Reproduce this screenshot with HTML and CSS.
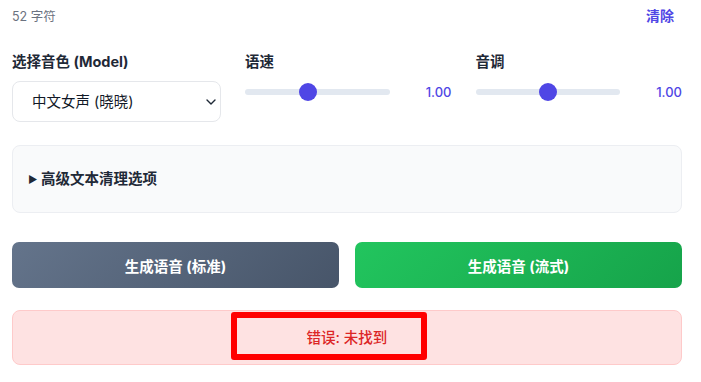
FILE: index.html
```html
<!DOCTYPE html>
<html lang="zh-CN">
<head>
<meta charset="utf-8">
<title>TTS</title>
<link rel="stylesheet" href="styles.css">
</head>
<body>
<div class="page">
  <div class="topbar">
    <span class="count">52 字符</span>
    <button class="clear" type="button">清除</button>
  </div>

  <div class="controls">
    <div class="field">
      <label class="label" for="voice">选择音色 (Model)</label>
      <div class="select-wrap">
        <select id="voice" class="select">
          <option>中文女声 (晓晓)</option>
        </select>
        <svg class="chevron" width="10" height="6" viewBox="0 0 10 6" aria-hidden="true">
          <path d="M1 1 L5 5 L9 1" fill="none" stroke="#1f2937" stroke-width="1.4" stroke-linecap="round" stroke-linejoin="round"/>
        </svg>
      </div>
    </div>
    <div class="field">
      <label class="label" for="speed">语速</label>
      <div class="range-row">
        <input id="speed" class="range" type="range" min="0.25" max="2" step="0.05" value="1">
        <span class="value">1.00</span>
      </div>
    </div>
    <div class="field">
      <label class="label" for="pitch">音调</label>
      <div class="range-row">
        <input id="pitch" class="range" type="range" min="0.5" max="1.5" step="0.05" value="1">
        <span class="value">1.00</span>
      </div>
    </div>
  </div>

  <details class="advanced">
    <summary class="summary">高级文本清理选项</summary>
  </details>

  <div class="actions">
    <button class="btn btn-standard" type="button">生成语音 (标准)</button>
    <button class="btn btn-stream" type="button">生成语音 (流式)</button>
  </div>

  <div class="error">
    <span class="error-text">错误: 未找到</span>
    <div class="highlight"></div>
  </div>
</div>
</body>
</html>
```

FILE: styles.css
```css
* { box-sizing: border-box; }

body {
  margin: 0;
  background: #ffffff;
  font-family: Inter, "Noto Sans CJK SC", sans-serif;
  color: #1f2937;
}

.page {
  width: 670px;
  margin-left: 12px;
  padding-top: 5px;
  display: flex;
  flex-direction: column;
}

.topbar {
  height: 20px;
  display: flex;
  align-items: center;
  justify-content: space-between;
}

.count {
  font-size: 12.5px;
  color: #6b7280;
}

.clear {
  border: 0;
  background: none;
  padding: 0 8px 0 0;
  font-family: inherit;
  font-size: 14px;
  font-weight: 700;
  color: #4f46e5;
  cursor: pointer;
}

.controls {
  margin-top: 27px;
  display: grid;
  grid-template-columns: repeat(3, 1fr);
  column-gap: 24px;
}

.field {
  display: flex;
  flex-direction: column;
}

.label {
  font-size: 14.5px;
  line-height: 20px;
  font-weight: 700;
  color: #1f2937;
}

.select-wrap {
  position: relative;
  margin-top: 9px;
  width: 209px;
}

.select {
  appearance: none;
  -webkit-appearance: none;
  width: 100%;
  height: 41px;
  padding: 0 28px 0 19px;
  border: 1px solid #e5e7eb;
  border-radius: 8px;
  background: #ffffff;
  font-family: inherit;
  font-size: 14.5px;
  color: #111827;
}

.chevron {
  position: absolute;
  right: 5px;
  top: 18px;
  pointer-events: none;
}

.range-row {
  margin-top: 9px;
  height: 22px;
  display: flex;
  align-items: center;
  gap: 12px;
}

.range {
  -webkit-appearance: none;
  appearance: none;
  flex: 1;
  min-width: 0;
  height: 18px;
  margin: 0;
  background: transparent;
}

.range::-webkit-slider-runnable-track {
  height: 6px;
  border-radius: 3px;
  background: #e2e8f0;
}

.range::-webkit-slider-thumb {
  -webkit-appearance: none;
  width: 18px;
  height: 18px;
  margin-top: -6px;
  border-radius: 50%;
  background: #4f46e5;
  border: 0;
}

.value {
  width: 50px;
  text-align: right;
  font-size: 13px;
  font-weight: 500;
  color: #4f46e5;
}

.advanced {
  margin-top: 23px;
  padding: 23px 15px;
  border: 1px solid #eceef2;
  border-radius: 8px;
  background: #f9fafb;
}

.summary {
  font-size: 14.5px;
  line-height: 20px;
  font-weight: 700;
  color: #1f2937;
  cursor: pointer;
  list-style: none;
}

.summary::-webkit-details-marker { display: none; }

.summary::before {
  content: "▶";
  display: inline-block;
  width: 13px;
  font-size: 10px;
  vertical-align: 1px;
}

.actions {
  margin-top: 29px;
  display: grid;
  grid-template-columns: 1fr 1fr;
  column-gap: 16px;
}

.btn {
  height: 46px;
  border: 0;
  border-radius: 7px;
  font-family: inherit;
  font-size: 14.5px;
  font-weight: 700;
  color: #ffffff;
  cursor: pointer;
}

.btn-standard {
  background: linear-gradient(135deg, #64748b, #475569);
}

.btn-stream {
  background: linear-gradient(135deg, #22c55e, #16a34a);
}

.error {
  position: relative;
  margin-top: 22px;
  padding: 16px;
  border: 1px solid #fecaca;
  border-radius: 8px;
  background: #fee2e2;
  text-align: center;
}

.error-text {
  font-size: 14.5px;
  line-height: 20px;
  font-weight: 500;
  color: #dc2626;
}

.highlight {
  position: absolute;
  left: 218px;
  top: 1px;
  width: 196px;
  height: 48px;
  border: 6px solid #ff0000;
  border-radius: 3px;
  pointer-events: none;
}
```
